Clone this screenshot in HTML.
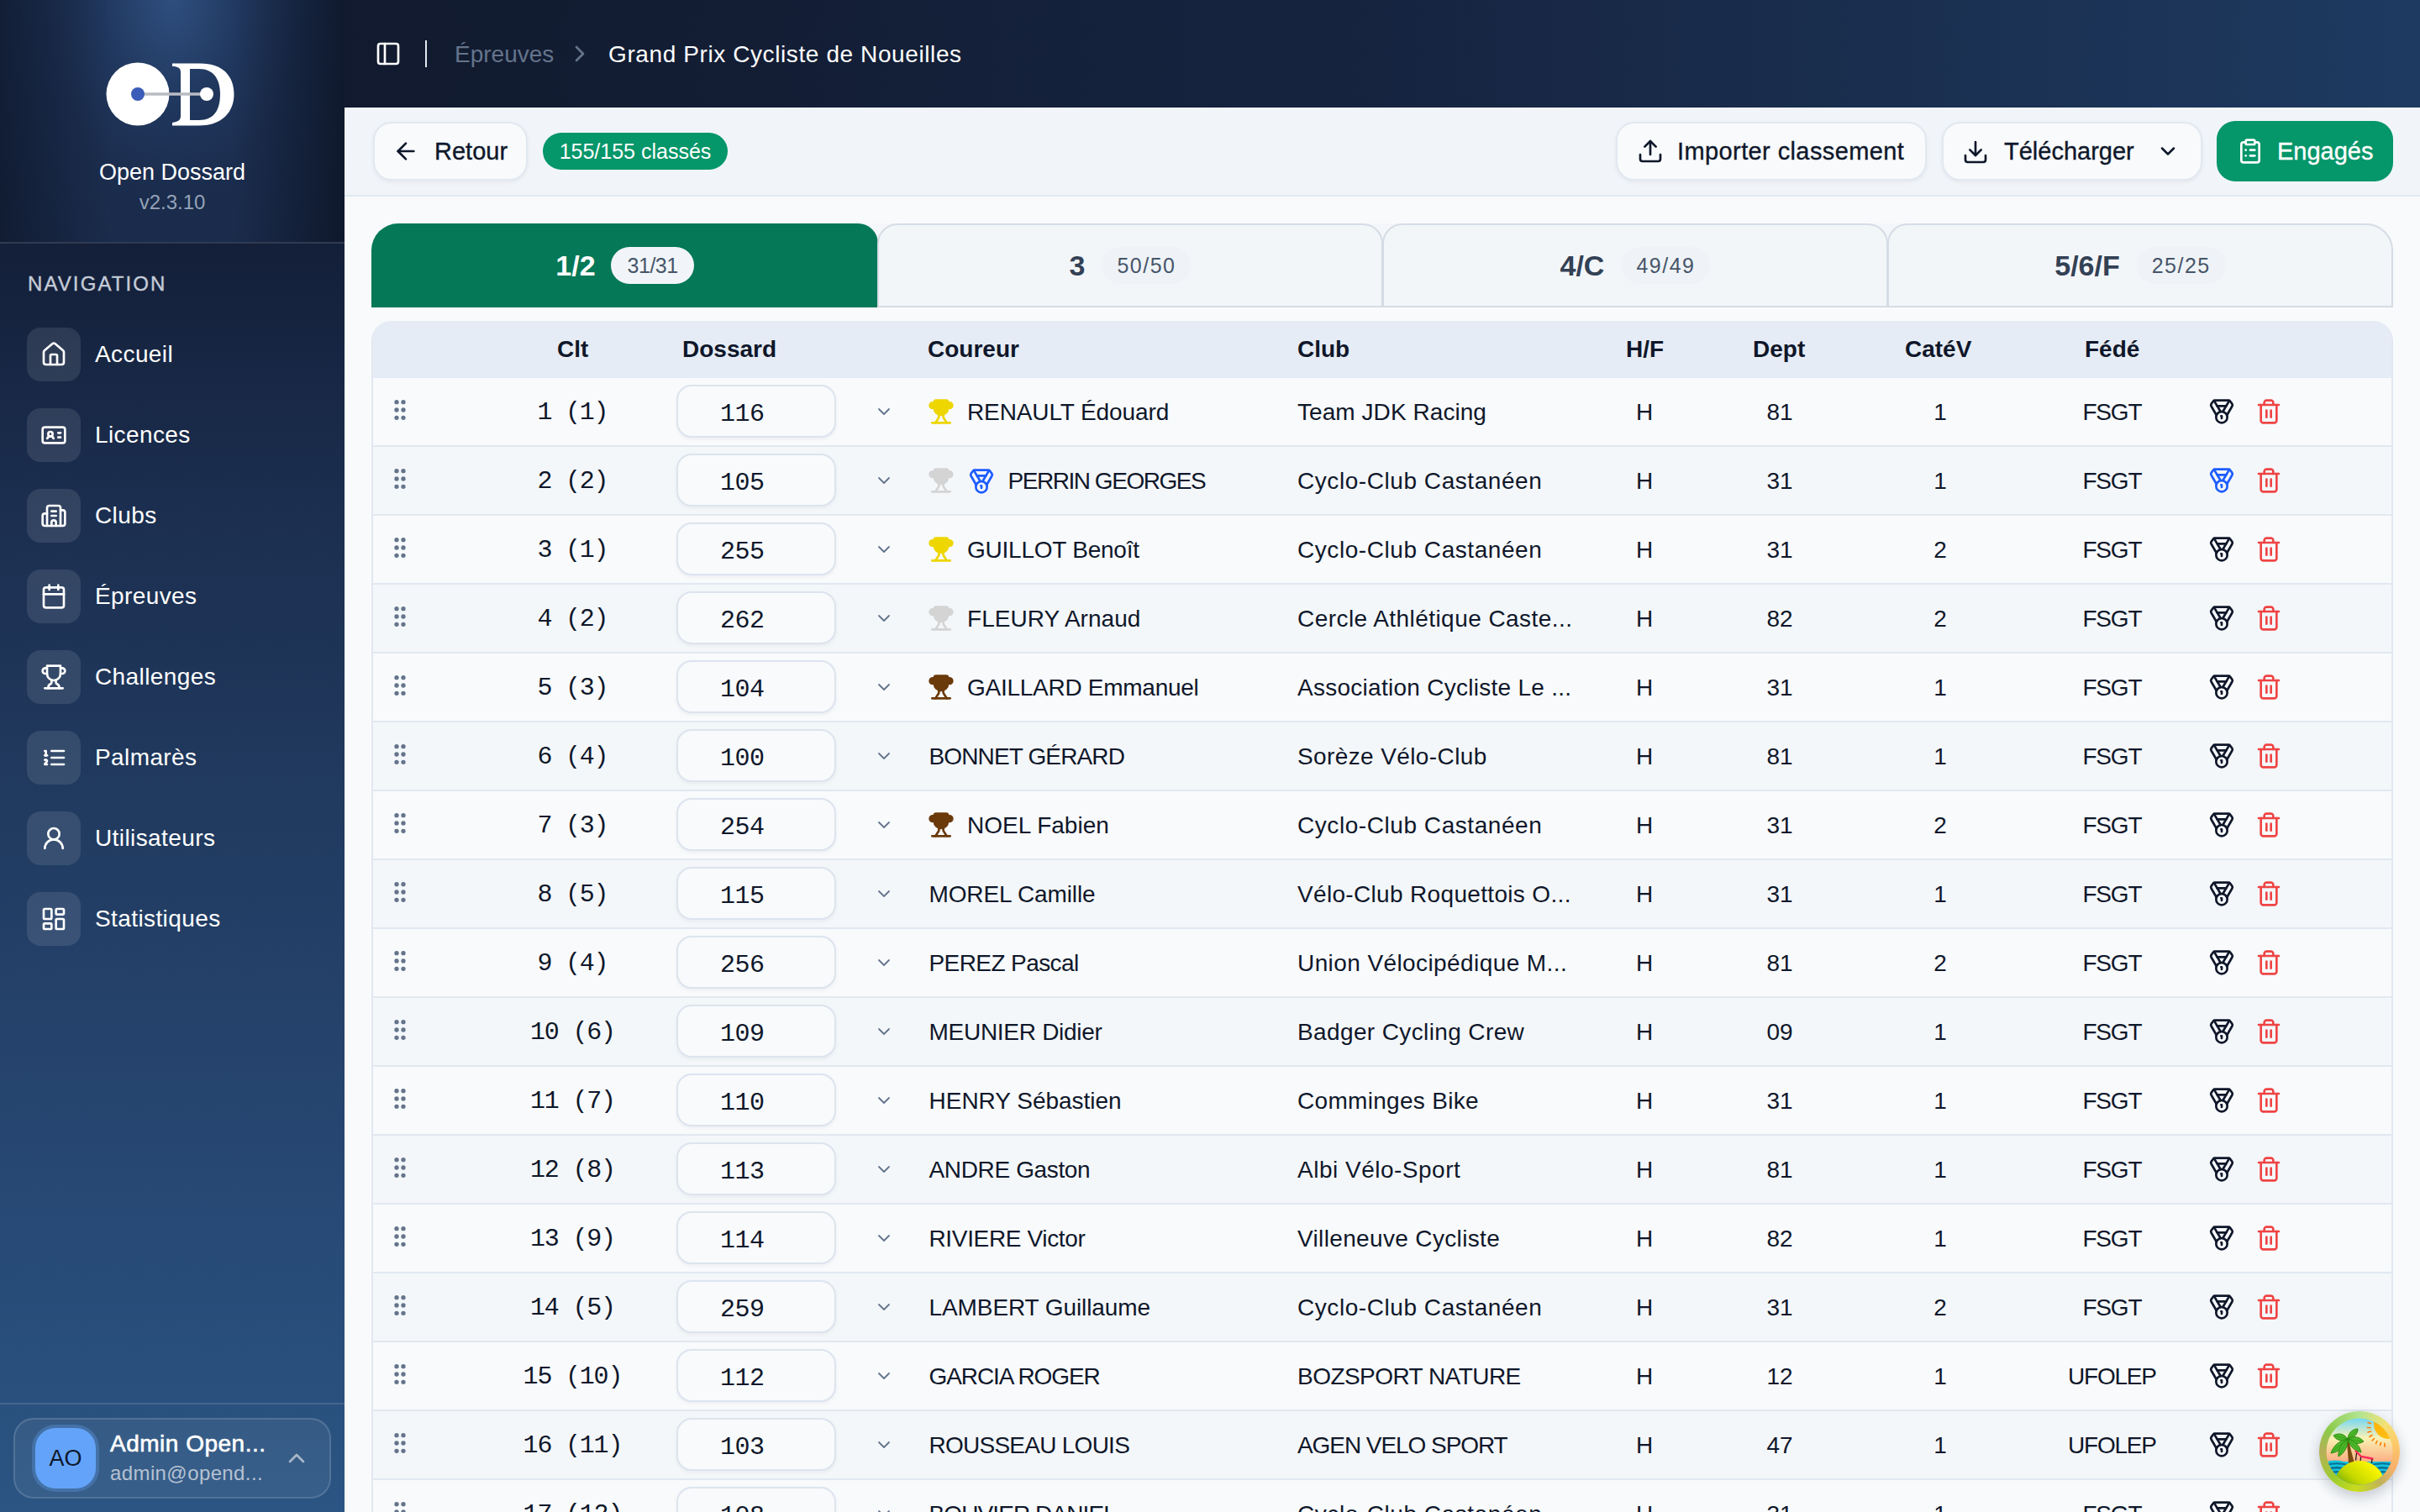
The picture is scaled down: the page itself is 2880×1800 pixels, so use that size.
<!DOCTYPE html>
<html><head><meta charset="utf-8"><title>Open Dossard</title>
<style>
*{box-sizing:border-box;margin:0;padding:0}
html,body{width:2880px;height:1800px;overflow:hidden;background:#f8fafc;font-family:"Liberation Sans",sans-serif;color:#0f172a}
.abs{position:absolute}
#sb{position:absolute;left:0;top:0;width:410px;height:1800px;
 background:linear-gradient(180deg,#111a2e 0%,#14203a 17%,#1b2e4f 33%,#213a5f 53%,#264671 75%,#2b5583 100%);overflow:hidden}
#sbtop{position:absolute;left:0;top:0;width:410px;height:288px;
 background:linear-gradient(90deg,rgba(10,16,30,0.55) 0%,rgba(10,16,30,0) 32%,rgba(10,16,30,0) 68%,rgba(10,16,30,0.7) 100%),radial-gradient(ellipse 150px 230px at 205px 0px,rgba(52,88,140,0.75) 0%,rgba(40,70,115,0.35) 55%,rgba(30,50,85,0) 100%),linear-gradient(180deg,#1d3155 0%,#1a2b4b 100%)}
#sbdiv{position:absolute;left:0;top:288px;width:410px;height:2px;background:rgba(255,255,255,0.12)}
.navlbl{position:absolute;left:33px;top:324px;font-size:24px;letter-spacing:2.1px;color:#c5ccd8;line-height:28px;-webkit-text-stroke:0.4px #c5ccd8}
.navit{position:absolute;left:32px;width:360px;height:64px}
.navit .ib{position:absolute;left:0;top:0;width:64px;height:64px;border-radius:16px;background:rgba(255,255,255,0.1)}
.navit .ib svg{position:absolute;left:16px;top:16px}
.navit .tx{position:absolute;left:81px;top:0;line-height:64px;font-size:28px;color:#fff;letter-spacing:0.4px}
#hdr{position:absolute;left:410px;top:0;width:2470px;height:128px;background:linear-gradient(90deg,#111a2e 0%,#162440 50%,#1e3a60 100%)}
#tb{position:absolute;left:410px;top:128px;width:2470px;height:106px;background:#f1f5f9;border-bottom:2px solid #e2e8f0}
.btn{position:absolute;height:70px;border:2px solid #e2e8f0;border-radius:22px;background:#f8fafc;box-shadow:0 2px 5px rgba(15,23,42,0.06);font-size:28px;color:#0f172a}
.btn svg{position:absolute}
.btn span{position:absolute;line-height:66px;top:0;-webkit-text-stroke:0.35px #0f172a}
.tab{position:absolute;top:266px;height:100px;border:2px solid #d5dce5;border-bottom:2px solid #d5dce5;border-radius:24px 24px 0 0;background:#f1f5f9}
.tab .t{position:absolute;font-weight:bold;font-size:34px;color:#334155;top:0;line-height:96px}
.tab .b{position:absolute;top:22px;height:52px;line-height:52px;border-radius:26px;font-size:24px;color:#475569;background:#e9eef4;text-align:center}
#tbl{position:absolute;left:442px;top:382px;width:2406px;height:1500px;border:2px solid #e2e8f0;border-top:none;border-radius:24px 24px 0 0;background:#f8fafc;overflow:hidden}
#th{position:absolute;left:0;top:0;width:2402px;height:68px;background:#e6ecf5}
.h{position:absolute;top:0;line-height:68px;font-size:28px;font-weight:bold;color:#0f172a}
.r{position:absolute;left:0;width:2402px;height:82px;border-bottom:2px solid #e2e8f0}
.c{position:absolute;top:1px;line-height:80px;font-size:28px;color:#0f172a;white-space:nowrap}
.mono{font-family:"Liberation Mono",monospace}
.inp{position:absolute;top:8px;left:360.5px;width:190px;height:63px;border:2px solid #dde4ee;border-radius:18px;background:#f8fafc;box-shadow:0 2px 4px rgba(15,23,42,0.05)}
.ic{position:absolute}
</style></head><body>

<div id="sb"><div id="sbtop"></div><div id="sbdiv"></div>
<svg class="abs" style="left:120px;top:66px" width="170" height="92" viewBox="0 0 170 92">
<circle cx="44" cy="46" r="37.5" fill="#fff"/>
<path d="M85 9.5 H118 C150 9.5 158.5 30 158.5 46 C158.5 66 146 83.5 116 83.5 H85 V80 C92 79 95 77 95 72 V20 C95 15 92 13 85 13 Z M106 16 V77 C108 77 112 77 117 77 C136 77 142 63 142 46 C142 28 134 16 117 16 C112 16 108 16 106 16 Z" fill="#fff" fill-rule="evenodd"/>
<line x1="44" y1="46" x2="126" y2="46" stroke="#b9bcc2" stroke-width="3.5"/>
<circle cx="44" cy="46" r="8" fill="#3b5cb8"/>
<circle cx="126" cy="46" r="8" fill="#fff"/>
</svg>
<div class="abs" style="left:0;top:188px;width:410px;text-align:center;font-size:27px;color:#fff;line-height:34px">Open Dossard</div>
<div class="abs" style="left:0;top:226px;width:410px;text-align:center;font-size:24px;color:#94a3b8;line-height:30px">v2.3.10</div>
<div class="navlbl">NAVIGATION</div>
<div class="navit" style="top:390px"><div class="ib"><svg width="32" height="32" viewBox="0 0 24 24" fill="none" stroke="#fff" stroke-width="2" stroke-linecap="round" stroke-linejoin="round" ><path d="M15 21v-8a1 1 0 0 0-1-1h-4a1 1 0 0 0-1 1v8"/><path d="M3 10a2 2 0 0 1 .709-1.528l7-5.999a2 2 0 0 1 2.582 0l7 5.999A2 2 0 0 1 21 10v9a2 2 0 0 1-2 2H5a2 2 0 0 1-2-2z"/></svg></div><div class="tx">Accueil</div></div>
<div class="navit" style="top:486px"><div class="ib"><svg width="32" height="32" viewBox="0 0 24 24" fill="none" stroke="#fff" stroke-width="2" stroke-linecap="round" stroke-linejoin="round" ><path d="M16 10h2"/><path d="M16 14h2"/><path d="M6.17 15a3 3 0 0 1 5.66 0"/><circle cx="9" cy="11" r="2"/><rect x="2" y="5" width="20" height="14" rx="2"/></svg></div><div class="tx">Licences</div></div>
<div class="navit" style="top:582px"><div class="ib"><svg width="32" height="32" viewBox="0 0 24 24" fill="none" stroke="#fff" stroke-width="2" stroke-linecap="round" stroke-linejoin="round" ><path d="M10 12h4"/><path d="M10 8h4"/><path d="M14 21v-3a2 2 0 0 0-4 0v3"/><path d="M6 10H4a2 2 0 0 0-2 2v7a2 2 0 0 0 2 2h16a2 2 0 0 0 2-2V9a2 2 0 0 0-2-2h-2"/><path d="M6 21V5a2 2 0 0 1 2-2h8a2 2 0 0 1 2 2v16"/></svg></div><div class="tx">Clubs</div></div>
<div class="navit" style="top:678px"><div class="ib"><svg width="32" height="32" viewBox="0 0 24 24" fill="none" stroke="#fff" stroke-width="2" stroke-linecap="round" stroke-linejoin="round" ><path d="M8 2v4"/><path d="M16 2v4"/><rect width="18" height="18" x="3" y="4" rx="2"/><path d="M3 10h18"/></svg></div><div class="tx">Épreuves</div></div>
<div class="navit" style="top:774px"><div class="ib"><svg width="32" height="32" viewBox="0 0 24 24" fill="none" stroke="#fff" stroke-width="2" stroke-linecap="round" stroke-linejoin="round" ><path d="M6 9H4.5a2.5 2.5 0 0 1 0-5H6"/><path d="M18 9h1.5a2.5 2.5 0 0 0 0-5H18"/><path d="M4 22h16"/><path d="M10 14.66V17c0 .55-.47.98-.97 1.21C7.85 18.75 7 20.24 7 22"/><path d="M14 14.66V17c0 .55.47.98.97 1.21C16.15 18.75 17 20.24 17 22"/><path d="M18 2H6v7a6 6 0 0 0 12 0V2Z"/></svg></div><div class="tx">Challenges</div></div>
<div class="navit" style="top:870px"><div class="ib"><svg width="32" height="32" viewBox="0 0 24 24" fill="none" stroke="#fff" stroke-width="2" stroke-linecap="round" stroke-linejoin="round" ><path d="M10 12h11"/><path d="M10 18h11"/><path d="M10 6h11"/><path d="M4 10h2"/><path d="M4 6h1v4"/><path d="M6 18H4c0-1 2-2 2-3s-1-1.5-2-1"/></svg></div><div class="tx">Palmarès</div></div>
<div class="navit" style="top:966px"><div class="ib"><svg width="32" height="32" viewBox="0 0 24 24" fill="none" stroke="#fff" stroke-width="2" stroke-linecap="round" stroke-linejoin="round" ><circle cx="12" cy="8" r="5"/><path d="M20 21a8 8 0 0 0-16 0"/></svg></div><div class="tx">Utilisateurs</div></div>
<div class="navit" style="top:1062px"><div class="ib"><svg width="32" height="32" viewBox="0 0 24 24" fill="none" stroke="#fff" stroke-width="2" stroke-linecap="round" stroke-linejoin="round" ><rect width="7" height="9" x="3" y="3" rx="1"/><rect width="7" height="5" x="14" y="3" rx="1"/><rect width="7" height="9" x="14" y="12" rx="1"/><rect width="7" height="5" x="3" y="16" rx="1"/></svg></div><div class="tx">Statistiques</div></div>
<div class="abs" style="left:0;top:1670px;width:410px;height:2px;background:rgba(255,255,255,0.12)"></div>
<div class="abs" style="left:16px;top:1688px;width:378px;height:96px;border:2px solid rgba(255,255,255,0.14);border-radius:24px;background:rgba(255,255,255,0.06)">
<div class="abs" style="left:20px;top:6px;width:80px;height:80px;border-radius:28px;background:#4472a8"></div>
<div class="abs" style="left:24px;top:10px;width:72px;height:72px;border-radius:24px;background:#63a4fa;text-align:center;line-height:72px;font-size:27px;color:#0f172a">AO</div>
<div class="abs" style="left:113px;top:12px;font-size:28px;color:#fff;line-height:34px;-webkit-text-stroke:0.6px #fff;letter-spacing:0.5px">Admin Open...</div>
<div class="abs" style="left:113px;top:49px;font-size:24px;color:#b6c2d3;line-height:30px;letter-spacing:0.4px">admin@opend...</div>
<svg class="abs" style="left:319px;top:30px" width="32" height="32" viewBox="0 0 24 24" fill="none" stroke="#a9b7c9" stroke-width="2" stroke-linecap="round" stroke-linejoin="round"><path d="m18 15-6-6-6 6"/></svg>
</div>
</div>
<div id="hdr">
<svg class="abs" style="left:36px;top:48px" width="32" height="32" viewBox="0 0 24 24" fill="none" stroke="#fff" stroke-width="2" stroke-linecap="round" stroke-linejoin="round"><rect width="18" height="18" x="3" y="3" rx="2"/><path d="M9 3v18"/></svg>
<div class="abs" style="left:96px;top:48px;width:2px;height:32px;background:#e2e8f0"></div>
<div class="abs" style="left:131px;top:45px;font-size:28px;line-height:40px;color:#64748b">Épreuves</div>
<svg class="abs" style="left:264px;top:48px" width="32" height="32" viewBox="0 0 24 24" fill="none" stroke="#64748b" stroke-width="2" stroke-linecap="round" stroke-linejoin="round"><path d="m9 18 6-6-6-6"/></svg>
<div class="abs" style="left:314px;top:45px;font-size:28px;line-height:40px;color:#fff;letter-spacing:0.6px">Grand Prix Cycliste de Noueilles</div>
</div>
<div id="tb">
</div>
<div class="btn" style="left:444px;top:145px;width:184px"><span style="left:71px;font-size:29px">Retour</span></div>
<div class="abs" style="left:646px;top:158px;width:220px;height:44px;border-radius:22px;background:#059669;color:#fff;font-size:25px;line-height:44px;text-align:center">155/155 classés</div>
<div class="btn" style="left:1923px;top:145px;width:370px"><span style="left:71px;font-size:29px;letter-spacing:0.4px">Importer classement</span></div>
<div class="btn" style="left:2311px;top:145px;width:310px"><span style="left:72px;font-size:29px">Télécharger</span></div>
<div class="abs" style="left:2638px;top:144px;width:210px;height:72px;border-radius:22px;background:#059669;color:#fff;font-size:29px"><span class="abs" style="left:72px;line-height:72px;-webkit-text-stroke:0.35px #fff">Engagés</span></div>
<svg class="abs" style="left:1947.7px;top:163.7px" width="32" height="32" viewBox="0 0 24 24" fill="none" stroke="#0f172a" stroke-width="2" stroke-linecap="round" stroke-linejoin="round"><path d="M12 3v12"/><path d="m17 8-5-5-5 5"/><path d="M21 15v4a2 2 0 0 1-2 2H5a2 2 0 0 1-2-2v-4"/></svg>
<svg class="abs" style="left:2335.3px;top:164.5px" width="32" height="32" viewBox="0 0 24 24" fill="none" stroke="#0f172a" stroke-width="2" stroke-linecap="round" stroke-linejoin="round"><path d="M12 15V3"/><path d="M21 15v4a2 2 0 0 1-2 2H5a2 2 0 0 1-2-2v-4"/><path d="m7 10 5 5 5-5"/></svg>
<svg class="abs" style="left:2566px;top:166px" width="28" height="28" viewBox="0 0 24 24" fill="none" stroke="#0f172a" stroke-width="2.2" stroke-linecap="round" stroke-linejoin="round"><path d="m6 9 6 6 6-6"/></svg>
<svg class="abs" style="left:2661.5px;top:164.2px" width="32" height="32" viewBox="0 0 24 24" fill="none" stroke="#fff" stroke-width="2" stroke-linecap="round" stroke-linejoin="round"><rect width="8" height="4" x="8" y="2" rx="1" ry="1"/><path d="M16 4h2a2 2 0 0 1 2 2v14a2 2 0 0 1-2 2H6a2 2 0 0 1-2-2V6a2 2 0 0 1 2-2h2"/><path d="M12 11h4"/><path d="M12 16h4"/><path d="M8 11h.01"/><path d="M8 16h.01"/></svg>
<svg class="abs" style="left:467.4px;top:164px" width="32" height="32" viewBox="0 0 24 24" fill="none" stroke="#0f172a" stroke-width="2" stroke-linecap="round" stroke-linejoin="round"><path d="m12 19-7-7 7-7"/><path d="M19 12H5"/></svg>
<div class="abs" style="left:442px;top:266px;width:2406px;height:100px;background:#f4f6f9;border-radius:32px 32px 0 0"></div>
<div class="abs" style="left:442px;top:266px;width:603px;height:100px;border-radius:32px 24px 0 0;background:#047857"></div>
<div class="abs" style="left:442px;top:266px;width:603px;height:100px;text-align:center;line-height:98px;white-space:nowrap"><span style="font-weight:bold;font-size:34px;color:#fff;vertical-align:middle">1/2</span><span style="display:inline-block;vertical-align:middle;margin-left:18px;height:44px;line-height:44px;padding:0 19px 0 20px;border-radius:22px;background:#f1f5f9;color:#475569;font-size:25px;letter-spacing:-0.5px">31/31</span></div>
<div class="abs" style="left:1044px;top:266px;width:602px;height:100px;border:2px solid #d5dce5;border-radius:24px 24px 0 0;background:#f3f6f9"></div>
<div class="abs" style="left:1044px;top:266px;width:602px;height:100px;text-align:center;line-height:98px;white-space:nowrap"><span style="font-weight:bold;font-size:34px;color:#334155;vertical-align:middle">3</span><span style="display:inline-block;vertical-align:middle;margin-left:20px;height:44px;line-height:44px;padding:0 18px;border-radius:22px;background:rgba(226,232,240,0.22);color:#475569;font-size:25px;letter-spacing:1.5px">50/50</span></div>
<div class="abs" style="left:1645px;top:266px;width:602px;height:100px;border:2px solid #d5dce5;border-radius:24px 24px 0 0;background:#f3f6f9"></div>
<div class="abs" style="left:1645px;top:266px;width:602px;height:100px;text-align:center;line-height:98px;white-space:nowrap"><span style="font-weight:bold;font-size:34px;color:#334155;vertical-align:middle">4/C</span><span style="display:inline-block;vertical-align:middle;margin-left:20px;height:44px;line-height:44px;padding:0 18px;border-radius:22px;background:rgba(226,232,240,0.22);color:#475569;font-size:25px;letter-spacing:1.5px">49/49</span></div>
<div class="abs" style="left:2246px;top:266px;width:602px;height:100px;border:2px solid #d5dce5;border-radius:24px 32px 0 0;background:#f3f6f9"></div>
<div class="abs" style="left:2246px;top:266px;width:602px;height:100px;text-align:center;line-height:98px;white-space:nowrap"><span style="font-weight:bold;font-size:34px;color:#334155;vertical-align:middle">5/6/F</span><span style="display:inline-block;vertical-align:middle;margin-left:20px;height:44px;line-height:44px;padding:0 18px;border-radius:22px;background:rgba(226,232,240,0.22);color:#475569;font-size:25px;letter-spacing:1.5px">25/25</span></div>
<div id="tbl"><div id="th">
<div class="h" style="left:219px">Clt</div>
<div class="h" style="left:368px">Dossard</div>
<div class="h" style="left:660px">Coureur</div>
<div class="h" style="left:1100px">Club</div>
<div class="h" style="left:1491px">H/F</div>
<div class="h" style="left:1642px">Dept</div>
<div class="h" style="left:1823px">CatéV</div>
<div class="h" style="left:2037px">Fédé</div>
</div>
<div class="r" style="top:68px;background:#f8fafc">
<svg class="ic" style="left:16px;top:22px" width="32" height="32" viewBox="0 0 24 24" fill="#64748b" stroke="#64748b" stroke-width="2"><circle cx="9" cy="12" r="1"/><circle cx="9" cy="5" r="1"/><circle cx="9" cy="19" r="1"/><circle cx="15" cy="12" r="1"/><circle cx="15" cy="5" r="1"/><circle cx="15" cy="19" r="1"/></svg>
<div class="c mono" style="top:1px;left:138px;width:200px;text-align:center;font-size:30px;letter-spacing:-1.2px;text-indent:-1.2px">1 (1)</div>
<div class="inp"></div><div class="c mono" style="top:3px;left:339.5px;width:200px;text-align:center;font-size:30px;letter-spacing:-0.6px;text-indent:-0.6px">116</div>
<svg class="ic" style="left:596px;top:28px" width="24" height="24" viewBox="0 0 24 24" fill="none" stroke="#64748b" stroke-width="1.8" stroke-linecap="round" stroke-linejoin="round"><path d="m6 9 6 6 6-6"/></svg>
<div class="ic" style="left:660px;top:24px"><svg width="32" height="32" viewBox="0 0 24 24" fill="#eed600" stroke="#eed600" stroke-width="2" stroke-linecap="round" stroke-linejoin="round"><path d="M6 9H4.5a2.5 2.5 0 0 1 0-5H6"/><path d="M18 9h1.5a2.5 2.5 0 0 0 0-5H18"/><path d="M4 22h16" fill="none"/><path d="M10 14.66V17.3L7 22" fill="none"/><path d="M14 14.66V17.3L17 22" fill="none"/><path d="M7.5 2h9a1.5 1.5 0 0 1 1.5 1.5V9a6 6 0 0 1-12 0V3.5A1.5 1.5 0 0 1 7.5 2Z"/></svg></div>
<div class="c" style="left:707px;letter-spacing:-0.11px">RENAULT Édouard</div>
<div class="c" style="left:1100px;letter-spacing:0.06px">Team JDK Racing</div>
<div class="c" style="left:1413px;width:200px;text-align:center">H</div>
<div class="c" style="left:1574px;width:200px;text-align:center">81</div>
<div class="c" style="left:1765px;width:200px;text-align:center">1</div>
<div class="c" style="left:1970px;width:200px;text-align:center;letter-spacing:-1.2px;text-indent:-1.2px">FSGT</div>
<svg class="ic" style="left:2184px;top:24px" width="32" height="32" viewBox="0 0 24 24" fill="none" stroke="#0f172a" stroke-width="2" stroke-linecap="round" stroke-linejoin="round"><path d="M7.21 15 2.66 7.14a2 2 0 0 1 .13-2.2L4.4 2.8A2 2 0 0 1 6 2h12a2 2 0 0 1 1.6.8l1.6 2.14a2 2 0 0 1 .14 2.2L16.79 15"/><path d="M11 12 5.12 2.2"/><path d="m13 12 5.88-9.8"/><path d="M8 7h8"/><circle cx="12" cy="17" r="5"/><path d="M12 18v-2h-.5"/></svg>
<svg class="ic" style="left:2240px;top:24px" width="32" height="32" viewBox="0 0 24 24" fill="none" stroke="#ef4444" stroke-width="2" stroke-linecap="round" stroke-linejoin="round"><path d="M3 6h18"/><path d="M19 6v14c0 1-1 2-2 2H7c-1 0-2-1-2-2V6"/><path d="M8 6V4c0-1 1-2 2-2h4c1 0 2 1 2 2v2"/><line x1="10" x2="10" y1="11" y2="17"/><line x1="14" x2="14" y1="11" y2="17"/></svg>
</div>
<div class="r" style="top:150px;background:#f4f7fa">
<svg class="ic" style="left:16px;top:22px" width="32" height="32" viewBox="0 0 24 24" fill="#64748b" stroke="#64748b" stroke-width="2"><circle cx="9" cy="12" r="1"/><circle cx="9" cy="5" r="1"/><circle cx="9" cy="19" r="1"/><circle cx="15" cy="12" r="1"/><circle cx="15" cy="5" r="1"/><circle cx="15" cy="19" r="1"/></svg>
<div class="c mono" style="top:1px;left:138px;width:200px;text-align:center;font-size:30px;letter-spacing:-1.2px;text-indent:-1.2px">2 (2)</div>
<div class="inp"></div><div class="c mono" style="top:3px;left:339.5px;width:200px;text-align:center;font-size:30px;letter-spacing:-0.6px;text-indent:-0.6px">105</div>
<svg class="ic" style="left:596px;top:28px" width="24" height="24" viewBox="0 0 24 24" fill="none" stroke="#64748b" stroke-width="1.8" stroke-linecap="round" stroke-linejoin="round"><path d="m6 9 6 6 6-6"/></svg>
<div class="ic" style="left:660px;top:24px"><svg width="32" height="32" viewBox="0 0 24 24" fill="#d4d4d4" stroke="#d4d4d4" stroke-width="2" stroke-linecap="round" stroke-linejoin="round"><path d="M6 9H4.5a2.5 2.5 0 0 1 0-5H6"/><path d="M18 9h1.5a2.5 2.5 0 0 0 0-5H18"/><path d="M4 22h16" fill="none"/><path d="M10 14.66V17.3L7 22" fill="none"/><path d="M14 14.66V17.3L17 22" fill="none"/><path d="M7.5 2h9a1.5 1.5 0 0 1 1.5 1.5V9a6 6 0 0 1-12 0V3.5A1.5 1.5 0 0 1 7.5 2Z"/></svg></div>
<svg class="ic" style="left:708px;top:25px" width="32" height="32" viewBox="0 0 24 24" fill="none" stroke="#1d5cff" stroke-width="2" stroke-linecap="round" stroke-linejoin="round"><path d="M7.21 15 2.66 7.14a2 2 0 0 1 .13-2.2L4.4 2.8A2 2 0 0 1 6 2h12a2 2 0 0 1 1.6.8l1.6 2.14a2 2 0 0 1 .14 2.2L16.79 15"/><path d="M11 12 5.12 2.2"/><path d="m13 12 5.88-9.8"/><path d="M8 7h8"/><circle cx="12" cy="17" r="5"/><path d="M12 18v-2h-.5"/></svg>
<div class="c" style="left:755.5px;letter-spacing:-1.46px">PERRIN GEORGES</div>
<div class="c" style="left:1100px;letter-spacing:0.56px">Cyclo-Club Castanéen</div>
<div class="c" style="left:1413px;width:200px;text-align:center">H</div>
<div class="c" style="left:1574px;width:200px;text-align:center">31</div>
<div class="c" style="left:1765px;width:200px;text-align:center">1</div>
<div class="c" style="left:1970px;width:200px;text-align:center;letter-spacing:-1.2px;text-indent:-1.2px">FSGT</div>
<svg class="ic" style="left:2184px;top:24px" width="32" height="32" viewBox="0 0 24 24" fill="none" stroke="#1d5cff" stroke-width="2" stroke-linecap="round" stroke-linejoin="round"><path d="M7.21 15 2.66 7.14a2 2 0 0 1 .13-2.2L4.4 2.8A2 2 0 0 1 6 2h12a2 2 0 0 1 1.6.8l1.6 2.14a2 2 0 0 1 .14 2.2L16.79 15"/><path d="M11 12 5.12 2.2"/><path d="m13 12 5.88-9.8"/><path d="M8 7h8"/><circle cx="12" cy="17" r="5"/><path d="M12 18v-2h-.5"/></svg>
<svg class="ic" style="left:2240px;top:24px" width="32" height="32" viewBox="0 0 24 24" fill="none" stroke="#ef4444" stroke-width="2" stroke-linecap="round" stroke-linejoin="round"><path d="M3 6h18"/><path d="M19 6v14c0 1-1 2-2 2H7c-1 0-2-1-2-2V6"/><path d="M8 6V4c0-1 1-2 2-2h4c1 0 2 1 2 2v2"/><line x1="10" x2="10" y1="11" y2="17"/><line x1="14" x2="14" y1="11" y2="17"/></svg>
</div>
<div class="r" style="top:232px;background:#f8fafc">
<svg class="ic" style="left:16px;top:22px" width="32" height="32" viewBox="0 0 24 24" fill="#64748b" stroke="#64748b" stroke-width="2"><circle cx="9" cy="12" r="1"/><circle cx="9" cy="5" r="1"/><circle cx="9" cy="19" r="1"/><circle cx="15" cy="12" r="1"/><circle cx="15" cy="5" r="1"/><circle cx="15" cy="19" r="1"/></svg>
<div class="c mono" style="top:1px;left:138px;width:200px;text-align:center;font-size:30px;letter-spacing:-1.2px;text-indent:-1.2px">3 (1)</div>
<div class="inp"></div><div class="c mono" style="top:3px;left:339.5px;width:200px;text-align:center;font-size:30px;letter-spacing:-0.6px;text-indent:-0.6px">255</div>
<svg class="ic" style="left:596px;top:28px" width="24" height="24" viewBox="0 0 24 24" fill="none" stroke="#64748b" stroke-width="1.8" stroke-linecap="round" stroke-linejoin="round"><path d="m6 9 6 6 6-6"/></svg>
<div class="ic" style="left:660px;top:24px"><svg width="32" height="32" viewBox="0 0 24 24" fill="#eed600" stroke="#eed600" stroke-width="2" stroke-linecap="round" stroke-linejoin="round"><path d="M6 9H4.5a2.5 2.5 0 0 1 0-5H6"/><path d="M18 9h1.5a2.5 2.5 0 0 0 0-5H18"/><path d="M4 22h16" fill="none"/><path d="M10 14.66V17.3L7 22" fill="none"/><path d="M14 14.66V17.3L17 22" fill="none"/><path d="M7.5 2h9a1.5 1.5 0 0 1 1.5 1.5V9a6 6 0 0 1-12 0V3.5A1.5 1.5 0 0 1 7.5 2Z"/></svg></div>
<div class="c" style="left:707px;letter-spacing:-0.23px">GUILLOT Benoît</div>
<div class="c" style="left:1100px;letter-spacing:0.56px">Cyclo-Club Castanéen</div>
<div class="c" style="left:1413px;width:200px;text-align:center">H</div>
<div class="c" style="left:1574px;width:200px;text-align:center">31</div>
<div class="c" style="left:1765px;width:200px;text-align:center">2</div>
<div class="c" style="left:1970px;width:200px;text-align:center;letter-spacing:-1.2px;text-indent:-1.2px">FSGT</div>
<svg class="ic" style="left:2184px;top:24px" width="32" height="32" viewBox="0 0 24 24" fill="none" stroke="#0f172a" stroke-width="2" stroke-linecap="round" stroke-linejoin="round"><path d="M7.21 15 2.66 7.14a2 2 0 0 1 .13-2.2L4.4 2.8A2 2 0 0 1 6 2h12a2 2 0 0 1 1.6.8l1.6 2.14a2 2 0 0 1 .14 2.2L16.79 15"/><path d="M11 12 5.12 2.2"/><path d="m13 12 5.88-9.8"/><path d="M8 7h8"/><circle cx="12" cy="17" r="5"/><path d="M12 18v-2h-.5"/></svg>
<svg class="ic" style="left:2240px;top:24px" width="32" height="32" viewBox="0 0 24 24" fill="none" stroke="#ef4444" stroke-width="2" stroke-linecap="round" stroke-linejoin="round"><path d="M3 6h18"/><path d="M19 6v14c0 1-1 2-2 2H7c-1 0-2-1-2-2V6"/><path d="M8 6V4c0-1 1-2 2-2h4c1 0 2 1 2 2v2"/><line x1="10" x2="10" y1="11" y2="17"/><line x1="14" x2="14" y1="11" y2="17"/></svg>
</div>
<div class="r" style="top:314px;background:#f4f7fa">
<svg class="ic" style="left:16px;top:22px" width="32" height="32" viewBox="0 0 24 24" fill="#64748b" stroke="#64748b" stroke-width="2"><circle cx="9" cy="12" r="1"/><circle cx="9" cy="5" r="1"/><circle cx="9" cy="19" r="1"/><circle cx="15" cy="12" r="1"/><circle cx="15" cy="5" r="1"/><circle cx="15" cy="19" r="1"/></svg>
<div class="c mono" style="top:1px;left:138px;width:200px;text-align:center;font-size:30px;letter-spacing:-1.2px;text-indent:-1.2px">4 (2)</div>
<div class="inp"></div><div class="c mono" style="top:3px;left:339.5px;width:200px;text-align:center;font-size:30px;letter-spacing:-0.6px;text-indent:-0.6px">262</div>
<svg class="ic" style="left:596px;top:28px" width="24" height="24" viewBox="0 0 24 24" fill="none" stroke="#64748b" stroke-width="1.8" stroke-linecap="round" stroke-linejoin="round"><path d="m6 9 6 6 6-6"/></svg>
<div class="ic" style="left:660px;top:24px"><svg width="32" height="32" viewBox="0 0 24 24" fill="#d4d4d4" stroke="#d4d4d4" stroke-width="2" stroke-linecap="round" stroke-linejoin="round"><path d="M6 9H4.5a2.5 2.5 0 0 1 0-5H6"/><path d="M18 9h1.5a2.5 2.5 0 0 0 0-5H18"/><path d="M4 22h16" fill="none"/><path d="M10 14.66V17.3L7 22" fill="none"/><path d="M14 14.66V17.3L17 22" fill="none"/><path d="M7.5 2h9a1.5 1.5 0 0 1 1.5 1.5V9a6 6 0 0 1-12 0V3.5A1.5 1.5 0 0 1 7.5 2Z"/></svg></div>
<div class="c" style="left:707px;letter-spacing:0.03px">FLEURY Arnaud</div>
<div class="c" style="left:1100px;letter-spacing:0.44px">Cercle Athlétique Caste...</div>
<div class="c" style="left:1413px;width:200px;text-align:center">H</div>
<div class="c" style="left:1574px;width:200px;text-align:center">82</div>
<div class="c" style="left:1765px;width:200px;text-align:center">2</div>
<div class="c" style="left:1970px;width:200px;text-align:center;letter-spacing:-1.2px;text-indent:-1.2px">FSGT</div>
<svg class="ic" style="left:2184px;top:24px" width="32" height="32" viewBox="0 0 24 24" fill="none" stroke="#0f172a" stroke-width="2" stroke-linecap="round" stroke-linejoin="round"><path d="M7.21 15 2.66 7.14a2 2 0 0 1 .13-2.2L4.4 2.8A2 2 0 0 1 6 2h12a2 2 0 0 1 1.6.8l1.6 2.14a2 2 0 0 1 .14 2.2L16.79 15"/><path d="M11 12 5.12 2.2"/><path d="m13 12 5.88-9.8"/><path d="M8 7h8"/><circle cx="12" cy="17" r="5"/><path d="M12 18v-2h-.5"/></svg>
<svg class="ic" style="left:2240px;top:24px" width="32" height="32" viewBox="0 0 24 24" fill="none" stroke="#ef4444" stroke-width="2" stroke-linecap="round" stroke-linejoin="round"><path d="M3 6h18"/><path d="M19 6v14c0 1-1 2-2 2H7c-1 0-2-1-2-2V6"/><path d="M8 6V4c0-1 1-2 2-2h4c1 0 2 1 2 2v2"/><line x1="10" x2="10" y1="11" y2="17"/><line x1="14" x2="14" y1="11" y2="17"/></svg>
</div>
<div class="r" style="top:396px;background:#f8fafc">
<svg class="ic" style="left:16px;top:22px" width="32" height="32" viewBox="0 0 24 24" fill="#64748b" stroke="#64748b" stroke-width="2"><circle cx="9" cy="12" r="1"/><circle cx="9" cy="5" r="1"/><circle cx="9" cy="19" r="1"/><circle cx="15" cy="12" r="1"/><circle cx="15" cy="5" r="1"/><circle cx="15" cy="19" r="1"/></svg>
<div class="c mono" style="top:1px;left:138px;width:200px;text-align:center;font-size:30px;letter-spacing:-1.2px;text-indent:-1.2px">5 (3)</div>
<div class="inp"></div><div class="c mono" style="top:3px;left:339.5px;width:200px;text-align:center;font-size:30px;letter-spacing:-0.6px;text-indent:-0.6px">104</div>
<svg class="ic" style="left:596px;top:28px" width="24" height="24" viewBox="0 0 24 24" fill="none" stroke="#64748b" stroke-width="1.8" stroke-linecap="round" stroke-linejoin="round"><path d="m6 9 6 6 6-6"/></svg>
<div class="ic" style="left:660px;top:24px"><svg width="32" height="32" viewBox="0 0 24 24" fill="#6b3a0b" stroke="#6b3a0b" stroke-width="2" stroke-linecap="round" stroke-linejoin="round"><path d="M6 9H4.5a2.5 2.5 0 0 1 0-5H6"/><path d="M18 9h1.5a2.5 2.5 0 0 0 0-5H18"/><path d="M4 22h16" fill="none"/><path d="M10 14.66V17.3L7 22" fill="none"/><path d="M14 14.66V17.3L17 22" fill="none"/><path d="M7.5 2h9a1.5 1.5 0 0 1 1.5 1.5V9a6 6 0 0 1-12 0V3.5A1.5 1.5 0 0 1 7.5 2Z"/></svg></div>
<div class="c" style="left:707px;letter-spacing:-0.27px">GAILLARD Emmanuel</div>
<div class="c" style="left:1100px;letter-spacing:0.27px">Association Cycliste Le ...</div>
<div class="c" style="left:1413px;width:200px;text-align:center">H</div>
<div class="c" style="left:1574px;width:200px;text-align:center">31</div>
<div class="c" style="left:1765px;width:200px;text-align:center">1</div>
<div class="c" style="left:1970px;width:200px;text-align:center;letter-spacing:-1.2px;text-indent:-1.2px">FSGT</div>
<svg class="ic" style="left:2184px;top:24px" width="32" height="32" viewBox="0 0 24 24" fill="none" stroke="#0f172a" stroke-width="2" stroke-linecap="round" stroke-linejoin="round"><path d="M7.21 15 2.66 7.14a2 2 0 0 1 .13-2.2L4.4 2.8A2 2 0 0 1 6 2h12a2 2 0 0 1 1.6.8l1.6 2.14a2 2 0 0 1 .14 2.2L16.79 15"/><path d="M11 12 5.12 2.2"/><path d="m13 12 5.88-9.8"/><path d="M8 7h8"/><circle cx="12" cy="17" r="5"/><path d="M12 18v-2h-.5"/></svg>
<svg class="ic" style="left:2240px;top:24px" width="32" height="32" viewBox="0 0 24 24" fill="none" stroke="#ef4444" stroke-width="2" stroke-linecap="round" stroke-linejoin="round"><path d="M3 6h18"/><path d="M19 6v14c0 1-1 2-2 2H7c-1 0-2-1-2-2V6"/><path d="M8 6V4c0-1 1-2 2-2h4c1 0 2 1 2 2v2"/><line x1="10" x2="10" y1="11" y2="17"/><line x1="14" x2="14" y1="11" y2="17"/></svg>
</div>
<div class="r" style="top:478px;background:#f4f7fa">
<svg class="ic" style="left:16px;top:22px" width="32" height="32" viewBox="0 0 24 24" fill="#64748b" stroke="#64748b" stroke-width="2"><circle cx="9" cy="12" r="1"/><circle cx="9" cy="5" r="1"/><circle cx="9" cy="19" r="1"/><circle cx="15" cy="12" r="1"/><circle cx="15" cy="5" r="1"/><circle cx="15" cy="19" r="1"/></svg>
<div class="c mono" style="top:1px;left:138px;width:200px;text-align:center;font-size:30px;letter-spacing:-1.2px;text-indent:-1.2px">6 (4)</div>
<div class="inp"></div><div class="c mono" style="top:3px;left:339.5px;width:200px;text-align:center;font-size:30px;letter-spacing:-0.6px;text-indent:-0.6px">100</div>
<svg class="ic" style="left:596px;top:28px" width="24" height="24" viewBox="0 0 24 24" fill="none" stroke="#64748b" stroke-width="1.8" stroke-linecap="round" stroke-linejoin="round"><path d="m6 9 6 6 6-6"/></svg>
<div class="c" style="left:661.5px;letter-spacing:-0.86px">BONNET GÉRARD</div>
<div class="c" style="left:1100px;letter-spacing:0.39px">Sorèze Vélo-Club</div>
<div class="c" style="left:1413px;width:200px;text-align:center">H</div>
<div class="c" style="left:1574px;width:200px;text-align:center">81</div>
<div class="c" style="left:1765px;width:200px;text-align:center">1</div>
<div class="c" style="left:1970px;width:200px;text-align:center;letter-spacing:-1.2px;text-indent:-1.2px">FSGT</div>
<svg class="ic" style="left:2184px;top:24px" width="32" height="32" viewBox="0 0 24 24" fill="none" stroke="#0f172a" stroke-width="2" stroke-linecap="round" stroke-linejoin="round"><path d="M7.21 15 2.66 7.14a2 2 0 0 1 .13-2.2L4.4 2.8A2 2 0 0 1 6 2h12a2 2 0 0 1 1.6.8l1.6 2.14a2 2 0 0 1 .14 2.2L16.79 15"/><path d="M11 12 5.12 2.2"/><path d="m13 12 5.88-9.8"/><path d="M8 7h8"/><circle cx="12" cy="17" r="5"/><path d="M12 18v-2h-.5"/></svg>
<svg class="ic" style="left:2240px;top:24px" width="32" height="32" viewBox="0 0 24 24" fill="none" stroke="#ef4444" stroke-width="2" stroke-linecap="round" stroke-linejoin="round"><path d="M3 6h18"/><path d="M19 6v14c0 1-1 2-2 2H7c-1 0-2-1-2-2V6"/><path d="M8 6V4c0-1 1-2 2-2h4c1 0 2 1 2 2v2"/><line x1="10" x2="10" y1="11" y2="17"/><line x1="14" x2="14" y1="11" y2="17"/></svg>
</div>
<div class="r" style="top:560px;background:#f8fafc">
<svg class="ic" style="left:16px;top:22px" width="32" height="32" viewBox="0 0 24 24" fill="#64748b" stroke="#64748b" stroke-width="2"><circle cx="9" cy="12" r="1"/><circle cx="9" cy="5" r="1"/><circle cx="9" cy="19" r="1"/><circle cx="15" cy="12" r="1"/><circle cx="15" cy="5" r="1"/><circle cx="15" cy="19" r="1"/></svg>
<div class="c mono" style="top:1px;left:138px;width:200px;text-align:center;font-size:30px;letter-spacing:-1.2px;text-indent:-1.2px">7 (3)</div>
<div class="inp"></div><div class="c mono" style="top:3px;left:339.5px;width:200px;text-align:center;font-size:30px;letter-spacing:-0.6px;text-indent:-0.6px">254</div>
<svg class="ic" style="left:596px;top:28px" width="24" height="24" viewBox="0 0 24 24" fill="none" stroke="#64748b" stroke-width="1.8" stroke-linecap="round" stroke-linejoin="round"><path d="m6 9 6 6 6-6"/></svg>
<div class="ic" style="left:660px;top:24px"><svg width="32" height="32" viewBox="0 0 24 24" fill="#6b3a0b" stroke="#6b3a0b" stroke-width="2" stroke-linecap="round" stroke-linejoin="round"><path d="M6 9H4.5a2.5 2.5 0 0 1 0-5H6"/><path d="M18 9h1.5a2.5 2.5 0 0 0 0-5H18"/><path d="M4 22h16" fill="none"/><path d="M10 14.66V17.3L7 22" fill="none"/><path d="M14 14.66V17.3L17 22" fill="none"/><path d="M7.5 2h9a1.5 1.5 0 0 1 1.5 1.5V9a6 6 0 0 1-12 0V3.5A1.5 1.5 0 0 1 7.5 2Z"/></svg></div>
<div class="c" style="left:707px;letter-spacing:0.03px">NOEL Fabien</div>
<div class="c" style="left:1100px;letter-spacing:0.56px">Cyclo-Club Castanéen</div>
<div class="c" style="left:1413px;width:200px;text-align:center">H</div>
<div class="c" style="left:1574px;width:200px;text-align:center">31</div>
<div class="c" style="left:1765px;width:200px;text-align:center">2</div>
<div class="c" style="left:1970px;width:200px;text-align:center;letter-spacing:-1.2px;text-indent:-1.2px">FSGT</div>
<svg class="ic" style="left:2184px;top:24px" width="32" height="32" viewBox="0 0 24 24" fill="none" stroke="#0f172a" stroke-width="2" stroke-linecap="round" stroke-linejoin="round"><path d="M7.21 15 2.66 7.14a2 2 0 0 1 .13-2.2L4.4 2.8A2 2 0 0 1 6 2h12a2 2 0 0 1 1.6.8l1.6 2.14a2 2 0 0 1 .14 2.2L16.79 15"/><path d="M11 12 5.12 2.2"/><path d="m13 12 5.88-9.8"/><path d="M8 7h8"/><circle cx="12" cy="17" r="5"/><path d="M12 18v-2h-.5"/></svg>
<svg class="ic" style="left:2240px;top:24px" width="32" height="32" viewBox="0 0 24 24" fill="none" stroke="#ef4444" stroke-width="2" stroke-linecap="round" stroke-linejoin="round"><path d="M3 6h18"/><path d="M19 6v14c0 1-1 2-2 2H7c-1 0-2-1-2-2V6"/><path d="M8 6V4c0-1 1-2 2-2h4c1 0 2 1 2 2v2"/><line x1="10" x2="10" y1="11" y2="17"/><line x1="14" x2="14" y1="11" y2="17"/></svg>
</div>
<div class="r" style="top:642px;background:#f4f7fa">
<svg class="ic" style="left:16px;top:22px" width="32" height="32" viewBox="0 0 24 24" fill="#64748b" stroke="#64748b" stroke-width="2"><circle cx="9" cy="12" r="1"/><circle cx="9" cy="5" r="1"/><circle cx="9" cy="19" r="1"/><circle cx="15" cy="12" r="1"/><circle cx="15" cy="5" r="1"/><circle cx="15" cy="19" r="1"/></svg>
<div class="c mono" style="top:1px;left:138px;width:200px;text-align:center;font-size:30px;letter-spacing:-1.2px;text-indent:-1.2px">8 (5)</div>
<div class="inp"></div><div class="c mono" style="top:3px;left:339.5px;width:200px;text-align:center;font-size:30px;letter-spacing:-0.6px;text-indent:-0.6px">115</div>
<svg class="ic" style="left:596px;top:28px" width="24" height="24" viewBox="0 0 24 24" fill="none" stroke="#64748b" stroke-width="1.8" stroke-linecap="round" stroke-linejoin="round"><path d="m6 9 6 6 6-6"/></svg>
<div class="c" style="left:661.5px;letter-spacing:-0.13px">MOREL Camille</div>
<div class="c" style="left:1100px;letter-spacing:0.33px">Vélo-Club Roquettois O...</div>
<div class="c" style="left:1413px;width:200px;text-align:center">H</div>
<div class="c" style="left:1574px;width:200px;text-align:center">31</div>
<div class="c" style="left:1765px;width:200px;text-align:center">1</div>
<div class="c" style="left:1970px;width:200px;text-align:center;letter-spacing:-1.2px;text-indent:-1.2px">FSGT</div>
<svg class="ic" style="left:2184px;top:24px" width="32" height="32" viewBox="0 0 24 24" fill="none" stroke="#0f172a" stroke-width="2" stroke-linecap="round" stroke-linejoin="round"><path d="M7.21 15 2.66 7.14a2 2 0 0 1 .13-2.2L4.4 2.8A2 2 0 0 1 6 2h12a2 2 0 0 1 1.6.8l1.6 2.14a2 2 0 0 1 .14 2.2L16.79 15"/><path d="M11 12 5.12 2.2"/><path d="m13 12 5.88-9.8"/><path d="M8 7h8"/><circle cx="12" cy="17" r="5"/><path d="M12 18v-2h-.5"/></svg>
<svg class="ic" style="left:2240px;top:24px" width="32" height="32" viewBox="0 0 24 24" fill="none" stroke="#ef4444" stroke-width="2" stroke-linecap="round" stroke-linejoin="round"><path d="M3 6h18"/><path d="M19 6v14c0 1-1 2-2 2H7c-1 0-2-1-2-2V6"/><path d="M8 6V4c0-1 1-2 2-2h4c1 0 2 1 2 2v2"/><line x1="10" x2="10" y1="11" y2="17"/><line x1="14" x2="14" y1="11" y2="17"/></svg>
</div>
<div class="r" style="top:724px;background:#f8fafc">
<svg class="ic" style="left:16px;top:22px" width="32" height="32" viewBox="0 0 24 24" fill="#64748b" stroke="#64748b" stroke-width="2"><circle cx="9" cy="12" r="1"/><circle cx="9" cy="5" r="1"/><circle cx="9" cy="19" r="1"/><circle cx="15" cy="12" r="1"/><circle cx="15" cy="5" r="1"/><circle cx="15" cy="19" r="1"/></svg>
<div class="c mono" style="top:1px;left:138px;width:200px;text-align:center;font-size:30px;letter-spacing:-1.2px;text-indent:-1.2px">9 (4)</div>
<div class="inp"></div><div class="c mono" style="top:3px;left:339.5px;width:200px;text-align:center;font-size:30px;letter-spacing:-0.6px;text-indent:-0.6px">256</div>
<svg class="ic" style="left:596px;top:28px" width="24" height="24" viewBox="0 0 24 24" fill="none" stroke="#64748b" stroke-width="1.8" stroke-linecap="round" stroke-linejoin="round"><path d="m6 9 6 6 6-6"/></svg>
<div class="c" style="left:661.5px;letter-spacing:-0.59px">PEREZ Pascal</div>
<div class="c" style="left:1100px;letter-spacing:0.41px">Union Vélocipédique M...</div>
<div class="c" style="left:1413px;width:200px;text-align:center">H</div>
<div class="c" style="left:1574px;width:200px;text-align:center">81</div>
<div class="c" style="left:1765px;width:200px;text-align:center">2</div>
<div class="c" style="left:1970px;width:200px;text-align:center;letter-spacing:-1.2px;text-indent:-1.2px">FSGT</div>
<svg class="ic" style="left:2184px;top:24px" width="32" height="32" viewBox="0 0 24 24" fill="none" stroke="#0f172a" stroke-width="2" stroke-linecap="round" stroke-linejoin="round"><path d="M7.21 15 2.66 7.14a2 2 0 0 1 .13-2.2L4.4 2.8A2 2 0 0 1 6 2h12a2 2 0 0 1 1.6.8l1.6 2.14a2 2 0 0 1 .14 2.2L16.79 15"/><path d="M11 12 5.12 2.2"/><path d="m13 12 5.88-9.8"/><path d="M8 7h8"/><circle cx="12" cy="17" r="5"/><path d="M12 18v-2h-.5"/></svg>
<svg class="ic" style="left:2240px;top:24px" width="32" height="32" viewBox="0 0 24 24" fill="none" stroke="#ef4444" stroke-width="2" stroke-linecap="round" stroke-linejoin="round"><path d="M3 6h18"/><path d="M19 6v14c0 1-1 2-2 2H7c-1 0-2-1-2-2V6"/><path d="M8 6V4c0-1 1-2 2-2h4c1 0 2 1 2 2v2"/><line x1="10" x2="10" y1="11" y2="17"/><line x1="14" x2="14" y1="11" y2="17"/></svg>
</div>
<div class="r" style="top:806px;background:#f4f7fa">
<svg class="ic" style="left:16px;top:22px" width="32" height="32" viewBox="0 0 24 24" fill="#64748b" stroke="#64748b" stroke-width="2"><circle cx="9" cy="12" r="1"/><circle cx="9" cy="5" r="1"/><circle cx="9" cy="19" r="1"/><circle cx="15" cy="12" r="1"/><circle cx="15" cy="5" r="1"/><circle cx="15" cy="19" r="1"/></svg>
<div class="c mono" style="top:1px;left:138px;width:200px;text-align:center;font-size:30px;letter-spacing:-1.2px;text-indent:-1.2px">10 (6)</div>
<div class="inp"></div><div class="c mono" style="top:3px;left:339.5px;width:200px;text-align:center;font-size:30px;letter-spacing:-0.6px;text-indent:-0.6px">109</div>
<svg class="ic" style="left:596px;top:28px" width="24" height="24" viewBox="0 0 24 24" fill="none" stroke="#64748b" stroke-width="1.8" stroke-linecap="round" stroke-linejoin="round"><path d="m6 9 6 6 6-6"/></svg>
<div class="c" style="left:661.5px;letter-spacing:-0.28px">MEUNIER Didier</div>
<div class="c" style="left:1100px;letter-spacing:0.38px">Badger Cycling Crew</div>
<div class="c" style="left:1413px;width:200px;text-align:center">H</div>
<div class="c" style="left:1574px;width:200px;text-align:center">09</div>
<div class="c" style="left:1765px;width:200px;text-align:center">1</div>
<div class="c" style="left:1970px;width:200px;text-align:center;letter-spacing:-1.2px;text-indent:-1.2px">FSGT</div>
<svg class="ic" style="left:2184px;top:24px" width="32" height="32" viewBox="0 0 24 24" fill="none" stroke="#0f172a" stroke-width="2" stroke-linecap="round" stroke-linejoin="round"><path d="M7.21 15 2.66 7.14a2 2 0 0 1 .13-2.2L4.4 2.8A2 2 0 0 1 6 2h12a2 2 0 0 1 1.6.8l1.6 2.14a2 2 0 0 1 .14 2.2L16.79 15"/><path d="M11 12 5.12 2.2"/><path d="m13 12 5.88-9.8"/><path d="M8 7h8"/><circle cx="12" cy="17" r="5"/><path d="M12 18v-2h-.5"/></svg>
<svg class="ic" style="left:2240px;top:24px" width="32" height="32" viewBox="0 0 24 24" fill="none" stroke="#ef4444" stroke-width="2" stroke-linecap="round" stroke-linejoin="round"><path d="M3 6h18"/><path d="M19 6v14c0 1-1 2-2 2H7c-1 0-2-1-2-2V6"/><path d="M8 6V4c0-1 1-2 2-2h4c1 0 2 1 2 2v2"/><line x1="10" x2="10" y1="11" y2="17"/><line x1="14" x2="14" y1="11" y2="17"/></svg>
</div>
<div class="r" style="top:888px;background:#f8fafc">
<svg class="ic" style="left:16px;top:22px" width="32" height="32" viewBox="0 0 24 24" fill="#64748b" stroke="#64748b" stroke-width="2"><circle cx="9" cy="12" r="1"/><circle cx="9" cy="5" r="1"/><circle cx="9" cy="19" r="1"/><circle cx="15" cy="12" r="1"/><circle cx="15" cy="5" r="1"/><circle cx="15" cy="19" r="1"/></svg>
<div class="c mono" style="top:1px;left:138px;width:200px;text-align:center;font-size:30px;letter-spacing:-1.2px;text-indent:-1.2px">11 (7)</div>
<div class="inp"></div><div class="c mono" style="top:3px;left:339.5px;width:200px;text-align:center;font-size:30px;letter-spacing:-0.6px;text-indent:-0.6px">110</div>
<svg class="ic" style="left:596px;top:28px" width="24" height="24" viewBox="0 0 24 24" fill="none" stroke="#64748b" stroke-width="1.8" stroke-linecap="round" stroke-linejoin="round"><path d="m6 9 6 6 6-6"/></svg>
<div class="c" style="left:661.5px;letter-spacing:-0.01px">HENRY Sébastien</div>
<div class="c" style="left:1100px;letter-spacing:0.3px">Comminges Bike</div>
<div class="c" style="left:1413px;width:200px;text-align:center">H</div>
<div class="c" style="left:1574px;width:200px;text-align:center">31</div>
<div class="c" style="left:1765px;width:200px;text-align:center">1</div>
<div class="c" style="left:1970px;width:200px;text-align:center;letter-spacing:-1.2px;text-indent:-1.2px">FSGT</div>
<svg class="ic" style="left:2184px;top:24px" width="32" height="32" viewBox="0 0 24 24" fill="none" stroke="#0f172a" stroke-width="2" stroke-linecap="round" stroke-linejoin="round"><path d="M7.21 15 2.66 7.14a2 2 0 0 1 .13-2.2L4.4 2.8A2 2 0 0 1 6 2h12a2 2 0 0 1 1.6.8l1.6 2.14a2 2 0 0 1 .14 2.2L16.79 15"/><path d="M11 12 5.12 2.2"/><path d="m13 12 5.88-9.8"/><path d="M8 7h8"/><circle cx="12" cy="17" r="5"/><path d="M12 18v-2h-.5"/></svg>
<svg class="ic" style="left:2240px;top:24px" width="32" height="32" viewBox="0 0 24 24" fill="none" stroke="#ef4444" stroke-width="2" stroke-linecap="round" stroke-linejoin="round"><path d="M3 6h18"/><path d="M19 6v14c0 1-1 2-2 2H7c-1 0-2-1-2-2V6"/><path d="M8 6V4c0-1 1-2 2-2h4c1 0 2 1 2 2v2"/><line x1="10" x2="10" y1="11" y2="17"/><line x1="14" x2="14" y1="11" y2="17"/></svg>
</div>
<div class="r" style="top:970px;background:#f4f7fa">
<svg class="ic" style="left:16px;top:22px" width="32" height="32" viewBox="0 0 24 24" fill="#64748b" stroke="#64748b" stroke-width="2"><circle cx="9" cy="12" r="1"/><circle cx="9" cy="5" r="1"/><circle cx="9" cy="19" r="1"/><circle cx="15" cy="12" r="1"/><circle cx="15" cy="5" r="1"/><circle cx="15" cy="19" r="1"/></svg>
<div class="c mono" style="top:1px;left:138px;width:200px;text-align:center;font-size:30px;letter-spacing:-1.2px;text-indent:-1.2px">12 (8)</div>
<div class="inp"></div><div class="c mono" style="top:3px;left:339.5px;width:200px;text-align:center;font-size:30px;letter-spacing:-0.6px;text-indent:-0.6px">113</div>
<svg class="ic" style="left:596px;top:28px" width="24" height="24" viewBox="0 0 24 24" fill="none" stroke="#64748b" stroke-width="1.8" stroke-linecap="round" stroke-linejoin="round"><path d="m6 9 6 6 6-6"/></svg>
<div class="c" style="left:661.5px;letter-spacing:-0.36px">ANDRE Gaston</div>
<div class="c" style="left:1100px;letter-spacing:0.5px">Albi Vélo-Sport</div>
<div class="c" style="left:1413px;width:200px;text-align:center">H</div>
<div class="c" style="left:1574px;width:200px;text-align:center">81</div>
<div class="c" style="left:1765px;width:200px;text-align:center">1</div>
<div class="c" style="left:1970px;width:200px;text-align:center;letter-spacing:-1.2px;text-indent:-1.2px">FSGT</div>
<svg class="ic" style="left:2184px;top:24px" width="32" height="32" viewBox="0 0 24 24" fill="none" stroke="#0f172a" stroke-width="2" stroke-linecap="round" stroke-linejoin="round"><path d="M7.21 15 2.66 7.14a2 2 0 0 1 .13-2.2L4.4 2.8A2 2 0 0 1 6 2h12a2 2 0 0 1 1.6.8l1.6 2.14a2 2 0 0 1 .14 2.2L16.79 15"/><path d="M11 12 5.12 2.2"/><path d="m13 12 5.88-9.8"/><path d="M8 7h8"/><circle cx="12" cy="17" r="5"/><path d="M12 18v-2h-.5"/></svg>
<svg class="ic" style="left:2240px;top:24px" width="32" height="32" viewBox="0 0 24 24" fill="none" stroke="#ef4444" stroke-width="2" stroke-linecap="round" stroke-linejoin="round"><path d="M3 6h18"/><path d="M19 6v14c0 1-1 2-2 2H7c-1 0-2-1-2-2V6"/><path d="M8 6V4c0-1 1-2 2-2h4c1 0 2 1 2 2v2"/><line x1="10" x2="10" y1="11" y2="17"/><line x1="14" x2="14" y1="11" y2="17"/></svg>
</div>
<div class="r" style="top:1052px;background:#f8fafc">
<svg class="ic" style="left:16px;top:22px" width="32" height="32" viewBox="0 0 24 24" fill="#64748b" stroke="#64748b" stroke-width="2"><circle cx="9" cy="12" r="1"/><circle cx="9" cy="5" r="1"/><circle cx="9" cy="19" r="1"/><circle cx="15" cy="12" r="1"/><circle cx="15" cy="5" r="1"/><circle cx="15" cy="19" r="1"/></svg>
<div class="c mono" style="top:1px;left:138px;width:200px;text-align:center;font-size:30px;letter-spacing:-1.2px;text-indent:-1.2px">13 (9)</div>
<div class="inp"></div><div class="c mono" style="top:3px;left:339.5px;width:200px;text-align:center;font-size:30px;letter-spacing:-0.6px;text-indent:-0.6px">114</div>
<svg class="ic" style="left:596px;top:28px" width="24" height="24" viewBox="0 0 24 24" fill="none" stroke="#64748b" stroke-width="1.8" stroke-linecap="round" stroke-linejoin="round"><path d="m6 9 6 6 6-6"/></svg>
<div class="c" style="left:661.5px;letter-spacing:-0.35px">RIVIERE Victor</div>
<div class="c" style="left:1100px;letter-spacing:0.35px">Villeneuve Cycliste</div>
<div class="c" style="left:1413px;width:200px;text-align:center">H</div>
<div class="c" style="left:1574px;width:200px;text-align:center">82</div>
<div class="c" style="left:1765px;width:200px;text-align:center">1</div>
<div class="c" style="left:1970px;width:200px;text-align:center;letter-spacing:-1.2px;text-indent:-1.2px">FSGT</div>
<svg class="ic" style="left:2184px;top:24px" width="32" height="32" viewBox="0 0 24 24" fill="none" stroke="#0f172a" stroke-width="2" stroke-linecap="round" stroke-linejoin="round"><path d="M7.21 15 2.66 7.14a2 2 0 0 1 .13-2.2L4.4 2.8A2 2 0 0 1 6 2h12a2 2 0 0 1 1.6.8l1.6 2.14a2 2 0 0 1 .14 2.2L16.79 15"/><path d="M11 12 5.12 2.2"/><path d="m13 12 5.88-9.8"/><path d="M8 7h8"/><circle cx="12" cy="17" r="5"/><path d="M12 18v-2h-.5"/></svg>
<svg class="ic" style="left:2240px;top:24px" width="32" height="32" viewBox="0 0 24 24" fill="none" stroke="#ef4444" stroke-width="2" stroke-linecap="round" stroke-linejoin="round"><path d="M3 6h18"/><path d="M19 6v14c0 1-1 2-2 2H7c-1 0-2-1-2-2V6"/><path d="M8 6V4c0-1 1-2 2-2h4c1 0 2 1 2 2v2"/><line x1="10" x2="10" y1="11" y2="17"/><line x1="14" x2="14" y1="11" y2="17"/></svg>
</div>
<div class="r" style="top:1134px;background:#f4f7fa">
<svg class="ic" style="left:16px;top:22px" width="32" height="32" viewBox="0 0 24 24" fill="#64748b" stroke="#64748b" stroke-width="2"><circle cx="9" cy="12" r="1"/><circle cx="9" cy="5" r="1"/><circle cx="9" cy="19" r="1"/><circle cx="15" cy="12" r="1"/><circle cx="15" cy="5" r="1"/><circle cx="15" cy="19" r="1"/></svg>
<div class="c mono" style="top:1px;left:138px;width:200px;text-align:center;font-size:30px;letter-spacing:-1.2px;text-indent:-1.2px">14 (5)</div>
<div class="inp"></div><div class="c mono" style="top:3px;left:339.5px;width:200px;text-align:center;font-size:30px;letter-spacing:-0.6px;text-indent:-0.6px">259</div>
<svg class="ic" style="left:596px;top:28px" width="24" height="24" viewBox="0 0 24 24" fill="none" stroke="#64748b" stroke-width="1.8" stroke-linecap="round" stroke-linejoin="round"><path d="m6 9 6 6 6-6"/></svg>
<div class="c" style="left:661.5px;letter-spacing:-0.09px">LAMBERT Guillaume</div>
<div class="c" style="left:1100px;letter-spacing:0.56px">Cyclo-Club Castanéen</div>
<div class="c" style="left:1413px;width:200px;text-align:center">H</div>
<div class="c" style="left:1574px;width:200px;text-align:center">31</div>
<div class="c" style="left:1765px;width:200px;text-align:center">2</div>
<div class="c" style="left:1970px;width:200px;text-align:center;letter-spacing:-1.2px;text-indent:-1.2px">FSGT</div>
<svg class="ic" style="left:2184px;top:24px" width="32" height="32" viewBox="0 0 24 24" fill="none" stroke="#0f172a" stroke-width="2" stroke-linecap="round" stroke-linejoin="round"><path d="M7.21 15 2.66 7.14a2 2 0 0 1 .13-2.2L4.4 2.8A2 2 0 0 1 6 2h12a2 2 0 0 1 1.6.8l1.6 2.14a2 2 0 0 1 .14 2.2L16.79 15"/><path d="M11 12 5.12 2.2"/><path d="m13 12 5.88-9.8"/><path d="M8 7h8"/><circle cx="12" cy="17" r="5"/><path d="M12 18v-2h-.5"/></svg>
<svg class="ic" style="left:2240px;top:24px" width="32" height="32" viewBox="0 0 24 24" fill="none" stroke="#ef4444" stroke-width="2" stroke-linecap="round" stroke-linejoin="round"><path d="M3 6h18"/><path d="M19 6v14c0 1-1 2-2 2H7c-1 0-2-1-2-2V6"/><path d="M8 6V4c0-1 1-2 2-2h4c1 0 2 1 2 2v2"/><line x1="10" x2="10" y1="11" y2="17"/><line x1="14" x2="14" y1="11" y2="17"/></svg>
</div>
<div class="r" style="top:1216px;background:#f8fafc">
<svg class="ic" style="left:16px;top:22px" width="32" height="32" viewBox="0 0 24 24" fill="#64748b" stroke="#64748b" stroke-width="2"><circle cx="9" cy="12" r="1"/><circle cx="9" cy="5" r="1"/><circle cx="9" cy="19" r="1"/><circle cx="15" cy="12" r="1"/><circle cx="15" cy="5" r="1"/><circle cx="15" cy="19" r="1"/></svg>
<div class="c mono" style="top:1px;left:138px;width:200px;text-align:center;font-size:30px;letter-spacing:-1.2px;text-indent:-1.2px">15 (10)</div>
<div class="inp"></div><div class="c mono" style="top:3px;left:339.5px;width:200px;text-align:center;font-size:30px;letter-spacing:-0.6px;text-indent:-0.6px">112</div>
<svg class="ic" style="left:596px;top:28px" width="24" height="24" viewBox="0 0 24 24" fill="none" stroke="#64748b" stroke-width="1.8" stroke-linecap="round" stroke-linejoin="round"><path d="m6 9 6 6 6-6"/></svg>
<div class="c" style="left:661.5px;letter-spacing:-1.09px">GARCIA ROGER</div>
<div class="c" style="left:1100px;letter-spacing:-0.54px">BOZSPORT NATURE</div>
<div class="c" style="left:1413px;width:200px;text-align:center">H</div>
<div class="c" style="left:1574px;width:200px;text-align:center">12</div>
<div class="c" style="left:1765px;width:200px;text-align:center">1</div>
<div class="c" style="left:1970px;width:200px;text-align:center;letter-spacing:-1.2px;text-indent:-1.2px">UFOLEP</div>
<svg class="ic" style="left:2184px;top:24px" width="32" height="32" viewBox="0 0 24 24" fill="none" stroke="#0f172a" stroke-width="2" stroke-linecap="round" stroke-linejoin="round"><path d="M7.21 15 2.66 7.14a2 2 0 0 1 .13-2.2L4.4 2.8A2 2 0 0 1 6 2h12a2 2 0 0 1 1.6.8l1.6 2.14a2 2 0 0 1 .14 2.2L16.79 15"/><path d="M11 12 5.12 2.2"/><path d="m13 12 5.88-9.8"/><path d="M8 7h8"/><circle cx="12" cy="17" r="5"/><path d="M12 18v-2h-.5"/></svg>
<svg class="ic" style="left:2240px;top:24px" width="32" height="32" viewBox="0 0 24 24" fill="none" stroke="#ef4444" stroke-width="2" stroke-linecap="round" stroke-linejoin="round"><path d="M3 6h18"/><path d="M19 6v14c0 1-1 2-2 2H7c-1 0-2-1-2-2V6"/><path d="M8 6V4c0-1 1-2 2-2h4c1 0 2 1 2 2v2"/><line x1="10" x2="10" y1="11" y2="17"/><line x1="14" x2="14" y1="11" y2="17"/></svg>
</div>
<div class="r" style="top:1298px;background:#f4f7fa">
<svg class="ic" style="left:16px;top:22px" width="32" height="32" viewBox="0 0 24 24" fill="#64748b" stroke="#64748b" stroke-width="2"><circle cx="9" cy="12" r="1"/><circle cx="9" cy="5" r="1"/><circle cx="9" cy="19" r="1"/><circle cx="15" cy="12" r="1"/><circle cx="15" cy="5" r="1"/><circle cx="15" cy="19" r="1"/></svg>
<div class="c mono" style="top:1px;left:138px;width:200px;text-align:center;font-size:30px;letter-spacing:-1.2px;text-indent:-1.2px">16 (11)</div>
<div class="inp"></div><div class="c mono" style="top:3px;left:339.5px;width:200px;text-align:center;font-size:30px;letter-spacing:-0.6px;text-indent:-0.6px">103</div>
<svg class="ic" style="left:596px;top:28px" width="24" height="24" viewBox="0 0 24 24" fill="none" stroke="#64748b" stroke-width="1.8" stroke-linecap="round" stroke-linejoin="round"><path d="m6 9 6 6 6-6"/></svg>
<div class="c" style="left:661.5px;letter-spacing:-0.74px">ROUSSEAU LOUIS</div>
<div class="c" style="left:1100px;letter-spacing:-1.06px">AGEN VELO SPORT</div>
<div class="c" style="left:1413px;width:200px;text-align:center">H</div>
<div class="c" style="left:1574px;width:200px;text-align:center">47</div>
<div class="c" style="left:1765px;width:200px;text-align:center">1</div>
<div class="c" style="left:1970px;width:200px;text-align:center;letter-spacing:-1.2px;text-indent:-1.2px">UFOLEP</div>
<svg class="ic" style="left:2184px;top:24px" width="32" height="32" viewBox="0 0 24 24" fill="none" stroke="#0f172a" stroke-width="2" stroke-linecap="round" stroke-linejoin="round"><path d="M7.21 15 2.66 7.14a2 2 0 0 1 .13-2.2L4.4 2.8A2 2 0 0 1 6 2h12a2 2 0 0 1 1.6.8l1.6 2.14a2 2 0 0 1 .14 2.2L16.79 15"/><path d="M11 12 5.12 2.2"/><path d="m13 12 5.88-9.8"/><path d="M8 7h8"/><circle cx="12" cy="17" r="5"/><path d="M12 18v-2h-.5"/></svg>
<svg class="ic" style="left:2240px;top:24px" width="32" height="32" viewBox="0 0 24 24" fill="none" stroke="#ef4444" stroke-width="2" stroke-linecap="round" stroke-linejoin="round"><path d="M3 6h18"/><path d="M19 6v14c0 1-1 2-2 2H7c-1 0-2-1-2-2V6"/><path d="M8 6V4c0-1 1-2 2-2h4c1 0 2 1 2 2v2"/><line x1="10" x2="10" y1="11" y2="17"/><line x1="14" x2="14" y1="11" y2="17"/></svg>
</div>
<div class="r" style="top:1380px;background:#f8fafc">
<svg class="ic" style="left:16px;top:22px" width="32" height="32" viewBox="0 0 24 24" fill="#64748b" stroke="#64748b" stroke-width="2"><circle cx="9" cy="12" r="1"/><circle cx="9" cy="5" r="1"/><circle cx="9" cy="19" r="1"/><circle cx="15" cy="12" r="1"/><circle cx="15" cy="5" r="1"/><circle cx="15" cy="19" r="1"/></svg>
<div class="c mono" style="top:1px;left:138px;width:200px;text-align:center;font-size:30px;letter-spacing:-1.2px;text-indent:-1.2px">17 (12)</div>
<div class="inp"></div><div class="c mono" style="top:3px;left:339.5px;width:200px;text-align:center;font-size:30px;letter-spacing:-0.6px;text-indent:-0.6px">108</div>
<svg class="ic" style="left:596px;top:28px" width="24" height="24" viewBox="0 0 24 24" fill="none" stroke="#64748b" stroke-width="1.8" stroke-linecap="round" stroke-linejoin="round"><path d="m6 9 6 6 6-6"/></svg>
<div class="c" style="left:661.5px;letter-spacing:-0.9px">BOUVIER DANIEL</div>
<div class="c" style="left:1100px;letter-spacing:0.56px">Cyclo-Club Castanéen</div>
<div class="c" style="left:1413px;width:200px;text-align:center">H</div>
<div class="c" style="left:1574px;width:200px;text-align:center">31</div>
<div class="c" style="left:1765px;width:200px;text-align:center">1</div>
<div class="c" style="left:1970px;width:200px;text-align:center;letter-spacing:-1.2px;text-indent:-1.2px">FSGT</div>
<svg class="ic" style="left:2184px;top:24px" width="32" height="32" viewBox="0 0 24 24" fill="none" stroke="#0f172a" stroke-width="2" stroke-linecap="round" stroke-linejoin="round"><path d="M7.21 15 2.66 7.14a2 2 0 0 1 .13-2.2L4.4 2.8A2 2 0 0 1 6 2h12a2 2 0 0 1 1.6.8l1.6 2.14a2 2 0 0 1 .14 2.2L16.79 15"/><path d="M11 12 5.12 2.2"/><path d="m13 12 5.88-9.8"/><path d="M8 7h8"/><circle cx="12" cy="17" r="5"/><path d="M12 18v-2h-.5"/></svg>
<svg class="ic" style="left:2240px;top:24px" width="32" height="32" viewBox="0 0 24 24" fill="none" stroke="#ef4444" stroke-width="2" stroke-linecap="round" stroke-linejoin="round"><path d="M3 6h18"/><path d="M19 6v14c0 1-1 2-2 2H7c-1 0-2-1-2-2V6"/><path d="M8 6V4c0-1 1-2 2-2h4c1 0 2 1 2 2v2"/><line x1="10" x2="10" y1="11" y2="17"/><line x1="14" x2="14" y1="11" y2="17"/></svg>
</div>
</div>
<div class="abs" style="left:2760px;top:1680px;width:96px;height:96px;border-radius:50%;box-shadow:0 6px 16px rgba(15,23,42,0.22);background:conic-gradient(from 0deg,#b2e491 0deg,#f5e072 45deg,#fcc86a 80deg,#f8b06e 115deg,#c2b25a 145deg,#c8dc1c 185deg,#9ccc2e 225deg,#b6b058 270deg,#8ccb4a 305deg,#b2e491 360deg)">
<svg class="abs" style="left:8px;top:8px" width="80" height="80" viewBox="0 0 80 80">
<defs><linearGradient id="sky" x1="0" y1="0" x2="0" y2="1"><stop offset="0" stop-color="#72d6f6"/><stop offset="0.3" stop-color="#f9f2b4"/><stop offset="0.55" stop-color="#fbc28f"/><stop offset="0.85" stop-color="#fd8674"/><stop offset="1" stop-color="#fd8674"/></linearGradient>
<linearGradient id="isl" x1="0.85" y1="0.15" x2="0.2" y2="0.9"><stop offset="0" stop-color="#fff700"/><stop offset="0.45" stop-color="#c4d800"/><stop offset="1" stop-color="#2f8a00"/></linearGradient>
<linearGradient id="sun" x1="0" y1="0" x2="1" y2="1"><stop offset="0" stop-color="#ffb000"/><stop offset="1" stop-color="#ffc21a"/></linearGradient>
<clipPath id="cc"><circle cx="40" cy="40" r="39.5"/></clipPath></defs>
<g clip-path="url(#cc)">
<rect width="80" height="80" fill="url(#sky)"/>
<circle cx="75" cy="7" r="18" fill="url(#sun)"/>
<g stroke="#ff7a00" stroke-width="1.6" stroke-linecap="round">
<path d="M50 5.5 L53.5 6.5"/><path d="M49.5 11.5 L53 11.8"/><path d="M50 17 L53.5 16"/><path d="M52 22.5 L55 20.5"/><path d="M55 27 L57.5 24.5"/><path d="M59.5 30.5 L61 27.5"/><path d="M64.5 32.5 L65.5 29.5"/><path d="M70 34 L70 30.5"/>
</g>
<path d="M0 52 Q12 49 22 52 L80 52 V80 H0Z" fill="#11c2dc"/>
<path d="M0 56 Q14 52 30 57 M50 57 Q66 52 80 56" stroke="#0d6f93" stroke-width="2" fill="none"/>
<path d="M0 61 Q14 57 30 62 M50 62 Q66 57 80 61" stroke="#0b5f85" stroke-width="2" fill="none"/>
<path d="M0 66 Q14 62 30 67 M50 67 Q66 62 80 66" stroke="#0b5f85" stroke-width="2" fill="none"/>
<path d="M27 54 C26.5 45 25.5 35 24.5 26 L27 25.5 C29 35 31.5 45 34 54 Z" fill="#7a4a10"/>
<g fill="#4cb82a" stroke="#2a8a10" stroke-width="1"><path d="M26 25 C21.3 18.2 14.3 17.7 9 21 C12.2 26.3 18.8 29.0 26 25Z"/><path d="M26 25 C15.4 26.8 8.2 34.4 6 42 C13.8 41.1 22.6 35.1 26 25Z"/><path d="M26 25 C17.7 30.0 14.2 38.9 15 46 C21.3 42.6 26.6 34.7 26 25Z"/><path d="M26 25 C33.7 24.3 37.8 18.8 38 13 C32.2 13.2 26.7 17.3 26 25Z"/><path d="M26 25 C31.8 31.5 39.6 31.6 45 28 C40.9 22.9 33.5 20.6 26 25Z"/><path d="M26 25 C28.1 34.1 35.2 39.8 42 41 C40.8 34.2 35.1 27.1 26 25Z"/></g><g stroke="#2a8a10" stroke-width="0.6" fill="none"><path d="M26 25 L11 21.5"/><path d="M26 25 L8 40"/><path d="M26 25 L16 44"/><path d="M26 25 L37 15"/><path d="M26 25 L43 28"/><path d="M26 25 L40 39"/></g>
<path d="M35.5 39.5 L42 46 L55.5 48.5" stroke="#ff2a5a" stroke-width="2.4" fill="none" stroke-linecap="round"/>
<path d="M36.5 42 L35.5 50.5 M41.5 46.5 L41.2 51 M55 49 L54.5 54" stroke="#111" stroke-width="1.2"/>
<ellipse cx="40" cy="80" rx="30" ry="29" fill="url(#isl)"/>
</g></svg></div>
</body></html>
